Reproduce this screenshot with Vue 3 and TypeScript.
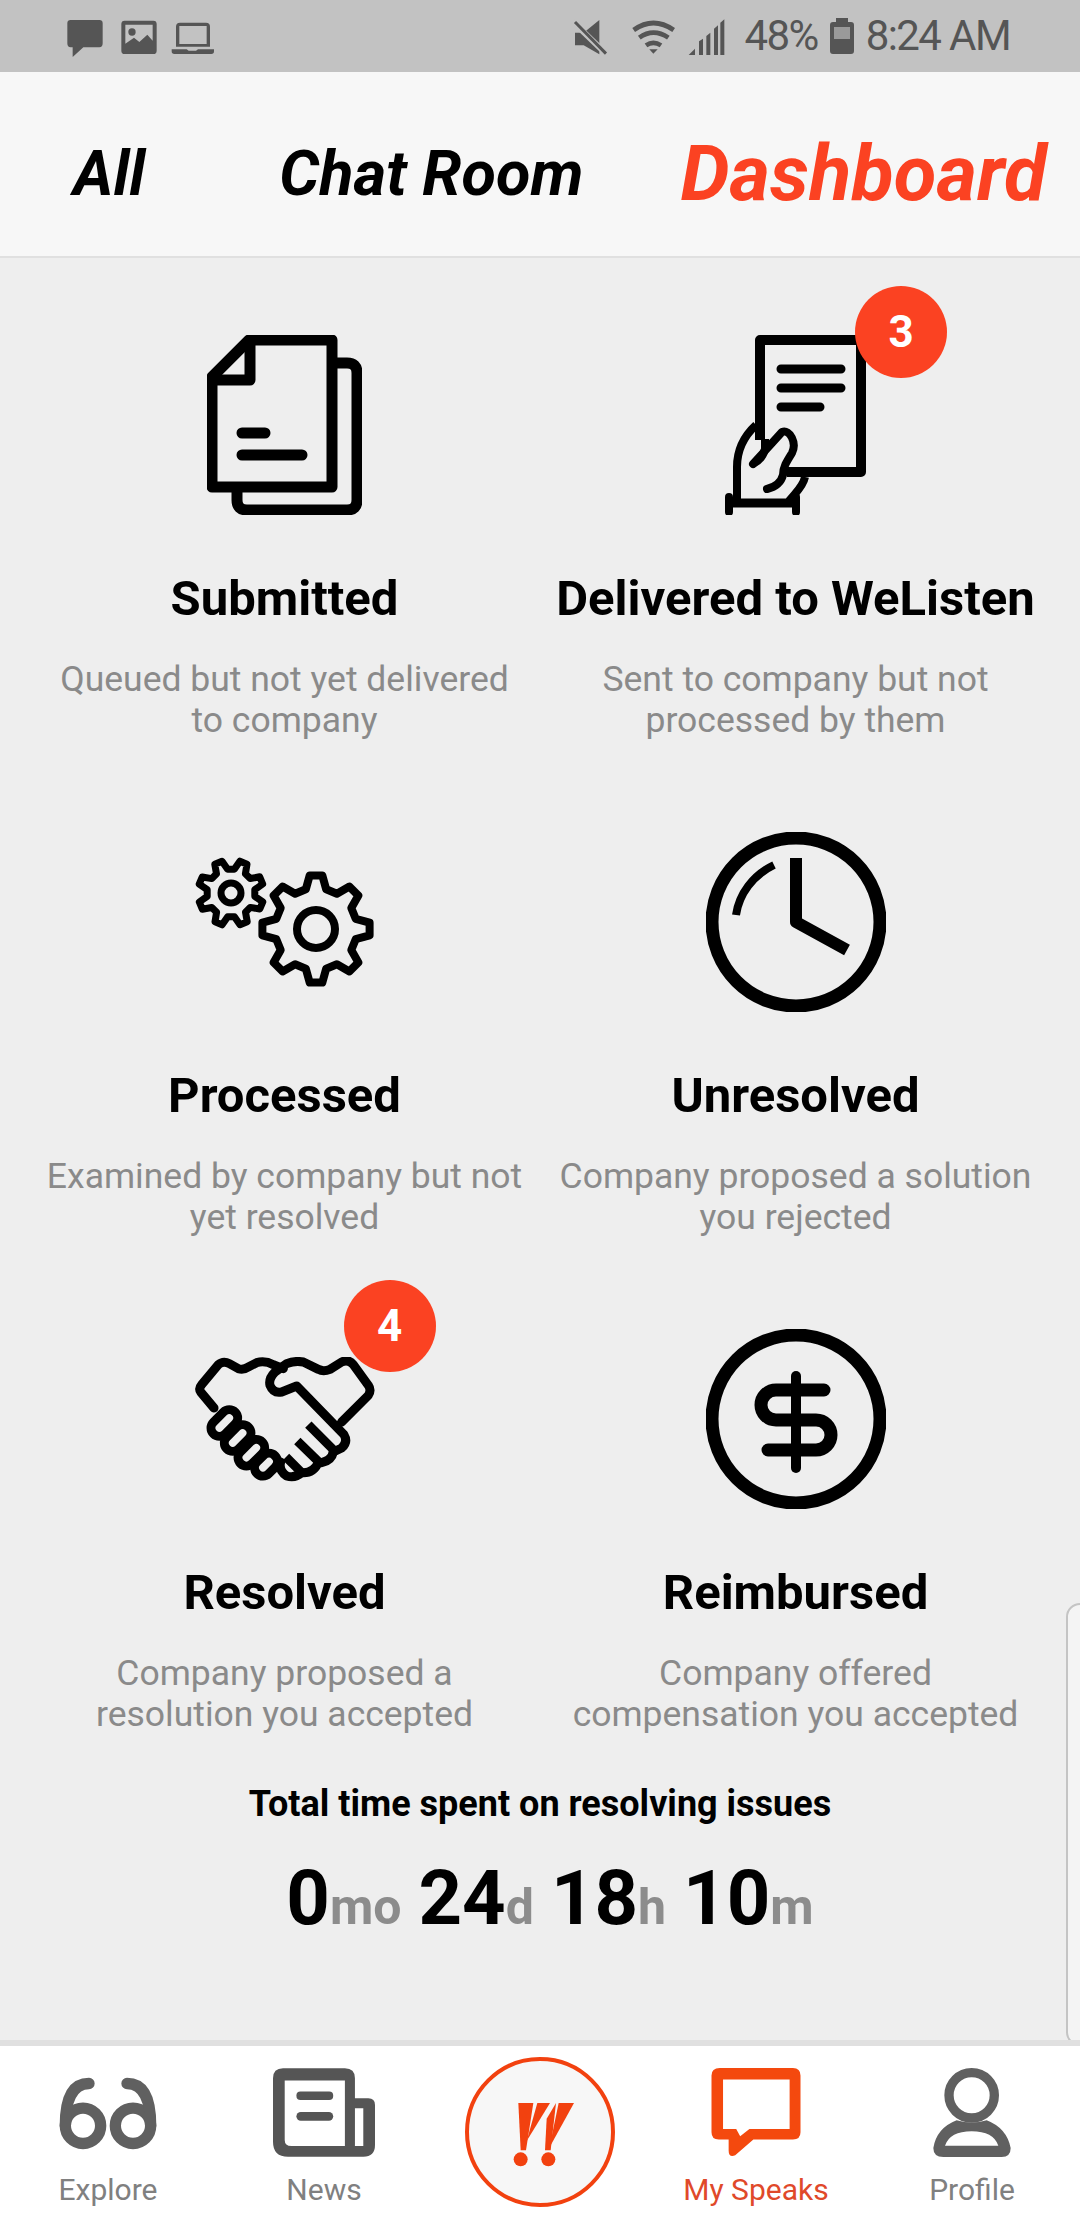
<template>
  <div class="screen">
    <!-- status bar -->
    <div class="status">
      <svg class="st-left" viewBox="0 0 540 180" width="180" height="60">
        <path d="M62 42H148Q158 42 158 52V112Q158 124 148 124H100L68 153V124H62Q52 124 52 112V52Q52 42 62 42Z" />
        <path fill-rule="evenodd" d="M224 44H310Q320 44 320 54V134Q320 144 310 144H224Q214 144 214 134V54Q214 44 224 44ZM226 56V113L252 95L268 108L292 86L308 104V56Z" />
        <circle cx="246" cy="78" r="11" />
        <path fill-rule="evenodd" d="M390 50H468Q480 50 480 62V122H378V62Q378 50 390 50ZM388 60V114H470V60Z" />
        <path d="M365 130H410L416 134H438L444 130H492V136Q492 144 484 144H373Q365 144 365 136Z" />
      </svg>
      <div class="st-right">
        <svg viewBox="0 0 525 180" width="175" height="60">
          <path d="M42 80H68L115 42V145L68 118H42Z" />
          <path d="M35 47L135 143" stroke="#c2c2c2" stroke-width="18" fill="none" />
          <path d="M42 48L135 143" stroke="#555" stroke-width="9" fill="none" />
          <g fill="none" stroke="#555" stroke-width="14">
            <path d="M218 72Q277 30 338 72" />
            <path d="M235 95Q277 65 322 95" />
            <path d="M255 118Q277 103 300 118" />
          </g>
          <path d="M265 130H290L277 143Z" />
          <path d="M383 147L402 128V147ZM414 147V106L426 98V147ZM436 147V90L448 80V147ZM459 147V68L471 58V147ZM478 147V50L490 40V147Z" />
        </svg>
        <span class="st-pct">48%</span>
        <svg class="st-batt" viewBox="0 0 24 36" width="24" height="36">
          <path fill-rule="evenodd" d="M6 0H18V4H21Q24 4 24 7V33Q24 36 21 36H3Q0 36 0 33V7Q0 4 3 4H6ZM4 9V21H20V9Z" />
          <rect x="4" y="9" width="16" height="12" fill="#9a9a9a" />
        </svg>
        <span class="st-time">8:24 AM</span>
      </div>
    </div>

    <!-- tabs -->
    <header class="tabs">
      <span class="tab tab-all">All</span>
      <span class="tab tab-chat">Chat Room</span>
      <span class="tab tab-dash">Dashboard</span>
    </header>

    <main class="content">
      <div class="grid">
        <section v-for="c in cards" :key="c.title" class="card">
          <div class="icon-box" :class="'w-' + c.icon">
            <!-- stacked documents -->
            <svg v-if="c.icon === 'docs'" viewBox="0 0 155 180" width="155" height="180" fill="none" stroke="#000" stroke-width="11" stroke-linejoin="round">
              <path d="M42 5H125V152H5V42Z" />
              <path d="M43 5V45H5" />
              <path d="M130 28H140Q150 28 150 38V165Q150 175 140 175H40Q30 175 30 165V157" />
              <path d="M35 98H58M35 120H95" stroke-linecap="round" />
            </svg>
            <!-- hand holding a sheet -->
            <svg v-else-if="c.icon === 'hand'" viewBox="0 0 141 180" width="141" height="180" fill="none" stroke="#000" stroke-width="8" stroke-linejoin="round">
              <path d="M35 105V5H136V137H62" stroke-width="10" />
              <path d="M56 34H116M56 53H116M56 72H95" stroke-width="9" stroke-linecap="round" />
              <path d="M31 90C18 102 12 116 12 132V166" />
              <path d="M80 142C78 152 70 158 64 166" />
              <path d="M28 129L57 97C65 94 72 108 67 118C62 126 58 132 58 140C56 148 50 152 42 154" stroke-linecap="round" />
              <path d="M40 104V114C38 122 34 126 28 129" />
              <path d="M4 162V177M71 162V177" stroke-width="8" stroke-linecap="round" />
              <path d="M4 168H71" stroke-width="9" />
            </svg>
            <!-- gears -->
            <svg v-else-if="c.icon === 'gears'" viewBox="0 0 180 132" width="180" height="132" fill="none" stroke="#000" stroke-linejoin="round">
              <path :d="smallGear" stroke-width="7" />
              <circle cx="36" cy="37" r="10" stroke-width="7" />
              <path :d="bigGear" stroke-width="8" />
              <circle cx="121" cy="73" r="19" stroke-width="8" />
            </svg>
            <!-- clock -->
            <svg v-else-if="c.icon === 'clock'" viewBox="0 0 180 180" width="180" height="180" fill="none" stroke="#000">
              <circle cx="90" cy="90" r="84" stroke-width="13" />
              <path d="M90 26V90L141 118" stroke-width="12" stroke-linejoin="round" />
              <path d="M68 33C47 43 33 62 30 83" stroke-width="8" />
            </svg>
            <!-- handshake -->
            <svg v-else-if="c.icon === 'shake'" viewBox="15 45 540 375" width="180" height="125" fill="none" stroke="#000" stroke-width="27" stroke-linejoin="round" stroke-linecap="round">
              <path d="M72 198L32 150Q25 140 35 128L85 68Q100 55 118 65L145 80Q160 85 175 75L200 62Q225 55 250 68L280 80" />
              <path d="M455 240L535 160Q545 145 535 130L490 68Q475 50 455 60L420 82Q400 90 385 82L340 60Q315 55 290 65L255 90Q235 110 240 130Q250 155 275 150L320 132L462 278Q475 300 455 318L430 330" />
              <path d="M355 248L432 325M322 297L392 365M288 345L335 392" stroke-linecap="butt" />
              <path d="M430 330Q425 355 395 362L385 362Q370 395 335 392Q315 410 290 402Q265 385 272 360" />
              <g transform="translate(103 243) rotate(45)">
                <rect x="-25" y="-46" width="50" height="92" rx="25" />
              </g>
              <g transform="translate(143 288) rotate(45)">
                <rect x="-25" y="-46" width="50" height="92" rx="25" />
              </g>
              <g transform="translate(184 332) rotate(45)">
                <rect x="-25" y="-46" width="50" height="92" rx="25" />
              </g>
              <g transform="translate(228 368) rotate(45)">
                <rect x="-25" y="-38" width="50" height="76" rx="25" />
              </g>
            </svg>
            <!-- dollar -->
            <svg v-else viewBox="0 0 180 180" width="180" height="180" fill="none" stroke="#000">
              <circle cx="90" cy="90" r="84" stroke-width="13" />
              <path d="M90 47V139" stroke-width="10" stroke-linecap="round" />
              <path d="M118 61H70A15 15 0 0 0 70 91H110A15 15 0 0 1 110 121H62" stroke-width="13" stroke-linecap="round" />
            </svg>
            <span v-if="c.badge" class="badge">{{ c.badge }}</span>
          </div>
          <h3 class="card-title">{{ c.title }}</h3>
          <p class="card-desc">
            <span v-for="line in c.desc" :key="line">{{ line }}</span>
          </p>
        </section>
      </div>

      <div class="total">
        <div class="total-title">Total time spent on resolving issues</div>
        <div class="total-time">
          <span v-for="t in totals" :key="t.unit" class="t-part">{{ t.value }}<small>{{ t.unit }}</small></span>
        </div>
      </div>

      <div class="side-handle"></div>
    </main>

    <!-- bottom nav -->
    <nav class="nav">
      <div class="nav-item">
        <svg viewBox="55 70 300 230" width="100" height="77" class="nav-explore" fill="none" stroke="#606060" stroke-width="34">
          <circle cx="130" cy="222" r="53" />
          <circle cx="280" cy="222" r="53" />
          <path d="M148 95C100 95 77 140 77 222" stroke-linecap="round" />
          <path d="M262 95C310 95 333 140 333 222" stroke-linecap="round" />
        </svg>
        <span class="nav-label">Explore</span>
      </div>
      <div class="nav-item">
        <svg viewBox="700 55 305 265" width="102" height="89" fill="#555">
          <path fill-rule="evenodd" d="M730 55H915Q945 55 945 85V145H985Q1005 145 1005 165V285Q1005 320 970 320H745Q700 320 700 275V85Q700 55 730 55ZM735 92V270Q735 288 755 288H915V92ZM945 175V288H970V175Z" />
          <rect x="770" y="125" width="110" height="25" rx="12" />
          <rect x="770" y="186" width="110" height="26" rx="13" />
        </svg>
        <span class="nav-label">News</span>
      </div>
      <div class="nav-item nav-center">
        <svg viewBox="45 20 450 450" width="150" height="150">
          <circle cx="270" cy="245" r="219" fill="#f7f7f7" stroke="#f2410f" stroke-width="12" />
          <g fill="#f2410f">
            <polygon points="205,158 250,158 228,300 212,300" />
            <polygon points="262,158 300,158 230,272" />
            <polygon points="290,205 318,158 302,300 285,300" />
            <polygon points="326,158 372,158 298,292" />
            <circle cx="212" cy="327" r="21" />
            <circle cx="295" cy="327" r="21" />
          </g>
        </svg>
      </div>
      <div class="nav-item active">
        <svg viewBox="33 55 270 270" width="90" height="90" fill="#f4490e">
          <path fill-rule="evenodd" d="M58 55H280Q303 55 303 78V250Q303 272 280 272H160L105 320Q85 328 85 305V272H55Q33 272 33 250V78Q33 55 58 55ZM68 90V240H108L120 262L148 240H270V90Z" />
        </svg>
        <span class="nav-label">My Speaks</span>
      </div>
      <div class="nav-item">
        <svg viewBox="700 55 232 267" width="78" height="89" fill="#606060">
          <circle cx="815" cy="137" r="68" fill="none" stroke="#606060" stroke-width="28" />
          <path fill-rule="evenodd" d="M730 322Q700 322 700 295Q710 235 770 212Q815 225 860 212Q920 235 932 295Q932 322 905 322ZM735 288H895Q880 245 815 245Q750 245 735 288Z" />
        </svg>
        <span class="nav-label">Profile</span>
      </div>
    </nav>
  </div>
</template>

<script setup lang="ts">
interface Card {
  icon: string
  title: string
  desc: string[]
  badge?: number
}

const cards: Card[] = [
  { icon: 'docs', title: 'Submitted', desc: ['Queued but not yet delivered', 'to company'] },
  { icon: 'hand', title: 'Delivered to WeListen', desc: ['Sent to company but not', 'processed by them'], badge: 3 },
  { icon: 'gears', title: 'Processed', desc: ['Examined by company but not', 'yet resolved'] },
  { icon: 'clock', title: 'Unresolved', desc: ['Company proposed a solution', 'you rejected'] },
  { icon: 'shake', title: 'Resolved', desc: ['Company proposed a', 'resolution you accepted'], badge: 4 },
  { icon: 'dollar', title: 'Reimbursed', desc: ['Company offered', 'compensation you accepted'] }
]

const totals = [
  { value: 0, unit: 'mo' },
  { value: 24, unit: 'd' },
  { value: 18, unit: 'h' },
  { value: 10, unit: 'm' }
]

// outline of a cog with flat teeth
function gearPath (cx: number, cy: number, outer: number, root: number, teeth: number, start: number) {
  const step = (Math.PI * 2) / teeth
  const pts: string[] = []
  for (let i = 0; i < teeth; i++) {
    const a = start + i * step
    const list: [number, number][] = [
      [root, a - step * 0.32],
      [outer, a - step * 0.15],
      [outer, a + step * 0.15],
      [root, a + step * 0.32]
    ]
    for (const [r, ang] of list) {
      pts.push((cx + r * Math.cos(ang)).toFixed(1) + ' ' + (cy + r * Math.sin(ang)).toFixed(1))
    }
  }
  return 'M' + pts.join('L') + 'Z'
}

const smallGear = gearPath(36, 37, 33, 24, 8, 0.39)
const bigGear = gearPath(121, 73, 54, 41, 8, -Math.PI / 2)
</script>

<style>
html, body {
  margin: 0;
  background: #eee;
}
</style>

<style scoped>
.screen {
  width: 1080px;
  height: 2220px;
  display: flex;
  flex-direction: column;
  font-family: Roboto, "Liberation Sans", sans-serif;
  overflow: hidden;
  background: #eee;
}

.status {
  height: 72px;
  flex: none;
  background: #c2c2c2;
  display: flex;
  align-items: center;
  justify-content: space-between;
  padding: 0 70px 0 50px;
  color: #555;
  fill: #555;
}
.st-left {
  display: block;
}
.st-right {
  display: flex;
  align-items: center;
}
.st-pct, .st-time {
  font-size: 42px;
  letter-spacing: -1.6px;
  line-height: 72px;
}
.st-pct {
  margin-left: 9px;
}
.st-batt {
  margin: 0 12px;
}

.tabs {
  height: 186px;
  flex: none;
  box-sizing: border-box;
  background: #f7f7f7;
  border-bottom: 2px solid #e0e0e0;
  display: flex;
  align-items: center;
  padding: 18px 0 0 73px;
  font-weight: 700;
  font-style: italic;
  color: #000;
}
.tab {
  white-space: nowrap;
}
.tab-all {
  font-size: 62px;
}
.tab-chat {
  margin-left: 134px;
  font-size: 63px;
}
.tab-dash {
  margin-left: 97px;
  font-size: 78px;
  color: #fb4222;
}

.content {
  flex: 1;
  position: relative;
  padding: 77px 29px 0;
}
.grid {
  display: grid;
  grid-template-columns: 511px 511px;
  row-gap: 91px;
}
.card {
  display: flex;
  flex-direction: column;
  align-items: center;
  text-align: center;
}
.icon-box {
  position: relative;
  height: 180px;
  display: flex;
  align-items: center;
  justify-content: center;
}
.icon-box svg {
  display: block;
}
.badge {
  position: absolute;
  top: -49px;
  left: 130px;
  width: 92px;
  height: 92px;
  border-radius: 50%;
  background: #fb4222;
  color: #fff;
  font-size: 44px;
  font-weight: 700;
  display: flex;
  align-items: center;
  justify-content: center;
}
.w-shake .badge {
  left: 149px;
}
.card-title {
  margin: 57px 0 0;
  font-size: 49px;
  line-height: 54px;
  font-weight: 700;
  color: #000;
}
.card-desc {
  margin: 33px 0 0;
  font-size: 35.5px;
  line-height: 41px;
  color: #8a8a8a;
}
.card-desc span {
  display: block;
  white-space: nowrap;
}

.total {
  margin-top: 48px;
  text-align: center;
}
.total-title {
  font-size: 36px;
  line-height: 42px;
  font-weight: 700;
  color: #000;
}
.total-time {
  margin-top: 28px;
  padding-left: 20px;
  display: flex;
  justify-content: center;
  gap: 17px;
  font-size: 76px;
  line-height: 90px;
  font-weight: 700;
  color: #000;
}
.t-part small {
  font-size: 50px;
  color: #8c8c8c;
}

.side-handle {
  position: absolute;
  right: -14px;
  bottom: -6px;
  width: 28px;
  height: 443px;
  box-sizing: border-box;
  background: #f4f4f4;
  border: 2px solid #c4c4c4;
  border-radius: 16px;
}

.nav {
  height: 180px;
  flex: none;
  box-sizing: border-box;
  position: relative;
  border-top: 6px solid #e0e0e0;
  background: #fff;
  display: grid;
  grid-template-columns: repeat(5, 216px);
}
.nav-item {
  display: flex;
  flex-direction: column;
  align-items: center;
  padding-top: 22px;
}
.nav-item svg {
  display: block;
  height: 89px;
}
.nav-item .nav-explore {
  height: 77px;
  margin: 7px 0 5px;
}
.nav-center {
  padding-top: 11px;
}
.nav-center svg {
  height: 150px;
}
.nav-label {
  margin-top: 15px;
  font-size: 30px;
  line-height: 36px;
  color: #808080;
}
.active .nav-label {
  color: #e0492a;
}
</style>
